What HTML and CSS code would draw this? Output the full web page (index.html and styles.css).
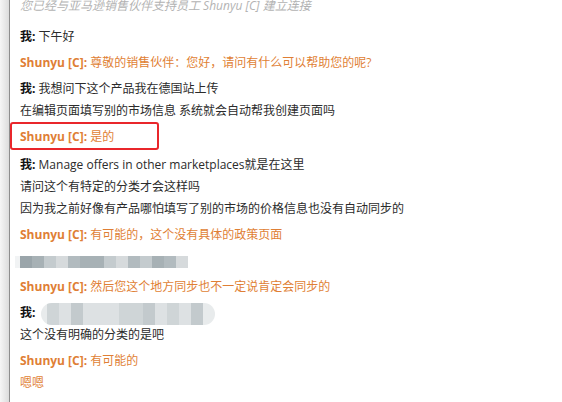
FILE: index.html
```html
<!DOCTYPE html>
<html lang="zh-CN">
<head>
    <meta charset="UTF-8">
    <title>聊天记录</title>
    <link rel="stylesheet" href="styles.css">
</head>
<body>
    <div class="window">
        <div class="edge"></div>
        <div class="chat">
            <div class="notice">您已经与亚马逊销售伙伴支持员工 Shunyu [C] 建立连接</div>

            <div class="msg me">
                <div class="line"><b>我:</b> 下午好</div>
            </div>
            <div class="msg agent">
                <div class="line"><b>Shunyu [C]:</b> 尊敬的销售伙伴：您好，请问有什么可以帮助您的呢?</div>
            </div>
            <div class="msg me">
                <div class="line"><b>我:</b> 我想问下这个产品我在德国站上传</div>
                <div class="line">在编辑页面填写别的市场信息 系统就会自动帮我创建页面吗</div>
            </div>
            <div class="msg agent marked">
                <div class="line"><b>Shunyu [C]:</b> 是的</div>
            </div>
            <div class="msg me">
                <div class="line"><b>我:</b> Manage offers in other marketplaces就是在这里</div>
                <div class="line">请问这个有特定的分类才会这样吗</div>
                <div class="line">因为我之前好像有产品哪怕填写了别的市场的价格信息也没有自动同步的</div>
            </div>
            <div class="msg agent">
                <div class="line"><b>Shunyu [C]:</b> 有可能的，这个没有具体的政策页面</div>
            </div>
            <div class="msg me">
                <div class="line">
                    <span class="mosaic">
                        <i class="c0"></i><i class="c4"></i><i class="c1"></i><i class="c2"></i><i class="c3"></i><i class="c4 w2"></i><i class="c1"></i><i class="c2"></i><i class="c3"></i><i class="c1"></i><i class="c4"></i><i class="c3"></i><i class="c2"></i>
                    </span>
                </div>
            </div>
            <div class="msg agent">
                <div class="line"><b>Shunyu [C]:</b> 然后您这个地方同步也不一定说肯定会同步的</div>
            </div>
            <div class="msg me">
                <div class="line"><b>我:</b>
                    <span class="pill">
                        <i class="c1"></i><i class="c2"></i><i class="c3"></i><i class="c2"></i><i class="c2 w2"></i><i class="c1"></i><i class="c1"></i><i class="c3"></i><i class="c2"></i><i class="c1"></i><i class="c2"></i><i class="c3"></i>
                    </span>
                </div>
                <div class="line">这个没有明确的分类的是吧</div>
            </div>
            <div class="msg agent">
                <div class="line"><b>Shunyu [C]:</b> 有可能的</div>
                <div class="line">嗯嗯</div>
            </div>
            <div class="msg me">
                <div class="line"><b>我:</b> 继续下一个问题</div>
            </div>
        </div>
    </div>
</body>
</html>
```

FILE: styles.css
```css
body {
    margin: 0;
    background-color: #fff;
    font-family: "Open Sans", "Noto Sans CJK SC", sans-serif;
    font-size: 12px;
    overflow: hidden;
}
.window {
    display: flex;
    height: 402px;
    overflow: hidden;
}
.edge {
    width: 9px;
    flex-shrink: 0;
    background: linear-gradient(to right, #f6f6f6, #dcdcdc);
    border-right: 1px solid #8e8e8e;
}
.chat {
    flex: 1;
    padding-left: 10px;
}
.notice {
    margin-top: -5px;
    line-height: 22px;
    color: #b3b3b3;
    font-style: italic;
}
.msg {
    margin-top: 4px;
}
.notice + .msg {
    margin-top: 9px;
}
.line {
    line-height: 22px;
    height: 22px;
    white-space: nowrap;
}
.me {
    color: #2b2b2b;
}
.me b {
    color: #111;
}
.agent {
    color: #df7f35;
}
.marked {
    width: 129px;
    margin: 0 0 2px -10px;
    padding: 2px 8px 0 8px;
    border: 2px solid #e9262b;
    border-radius: 3px;
}
.mosaic, .pill {
    display: inline-flex;
    vertical-align: middle;
}
.mosaic {
    margin-left: -5px;
    height: 12px;
    padding-left: 5px;
    background-color: #f1f3f4;
}
.pill {
    height: 22px;
    margin-left: 2px;
    padding: 0 12px 0 6px;
    border-radius: 11px;
    background-color: #e8ebec;
    overflow: hidden;
}
.mosaic i, .pill i {
    display: block;
    width: 12px;
    height: 100%;
}
.mosaic i.w2, .pill i.w2 {
    width: 24px;
}
.c0 { background-color: #9aa5aa; }
.c1 { background-color: #c4cbce; }
.c2 { background-color: #d6dadc; }
.c3 { background-color: #b2bbbf; }
.c4 { background-color: #a7b1b5; }
.pill .c1 { background-color: #cfd5d7; }
.pill .c2 { background-color: #dde1e3; }
.pill .c3 { background-color: #c3cacd; }
```
